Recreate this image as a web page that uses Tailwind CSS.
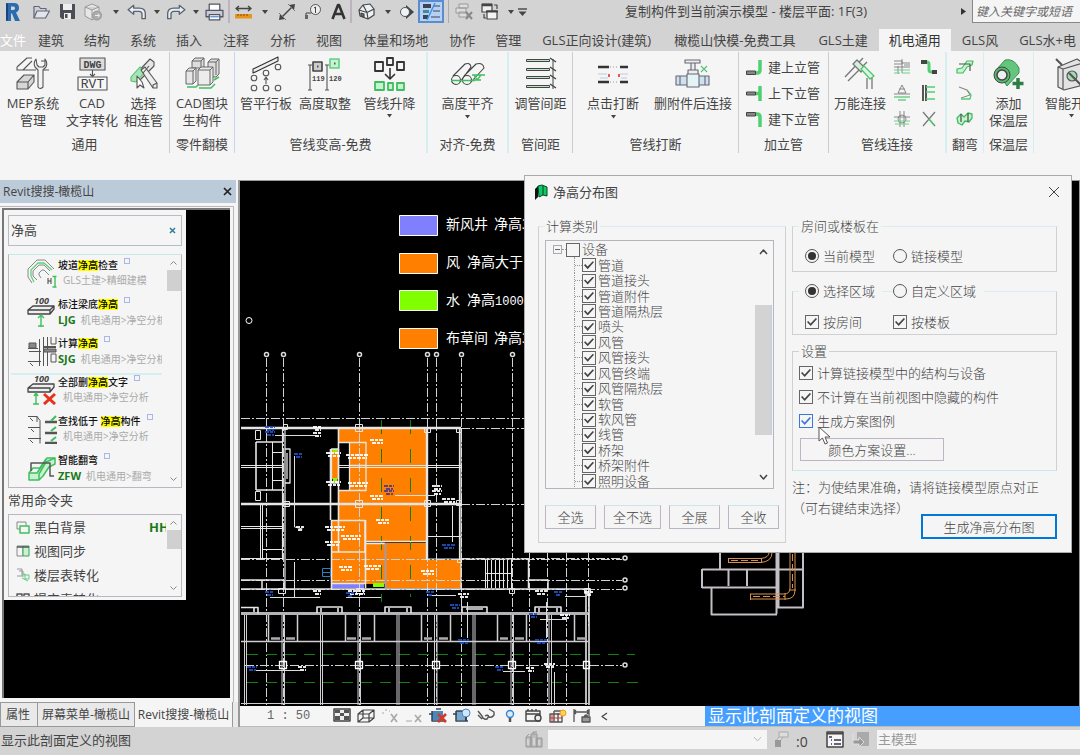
<!DOCTYPE html>
<html lang="zh-CN">
<head>
  <meta charset="UTF-8" />
  <meta name="viewport" content="width=device-width, initial-scale=1.0" />
  <title>净高分布图</title>
  <script src="https://cdn.jsdelivr.net/npm/@tailwindcss/browser@4"></script>
  <style>
    body { font-family: "Open Sans", "Noto Sans CJK SC", sans-serif; }
    svg { fill: none; stroke-linejoin: round; flex-shrink: 0; }
    .tick:checked::before {
      content: ""; width: 10px; height: 8px; background: currentColor;
      clip-path: polygon(0 50%, 12% 36%, 36% 68%, 88% 0, 100% 12%, 37% 100%);
    }
    .dot:checked::before { content: ""; width: 8px; height: 8px; border-radius: 50%; background: #333; }
  </style>
</head>
<body class="h-screen min-h-[755px] flex flex-col overflow-hidden bg-[#f5f5f5] text-[13px] text-[#444]">

  <!-- Barra de acceso rápido -->
  <header class="bg-[#d3d3d3]">
    <div class="h-[25px] flex items-start overflow-hidden">
      <div class="flex h-[23px] items-center pl-1">
        <button class="w-[28px]" aria-label="Revit"><svg width="18" height="20" viewBox="0 0 18 20"><path d="M2 1h8q5 0 5 5q0 3-3 4.500l4 8.500h-5l-3-7.500H7V19H2z" fill="#2b6cb0"/><path d="M7 4.500h2.500q1.500 0 1.500 1.700T9.500 8H7z" fill="#d3d3d3"/><path d="M2 1v18l2-1V2z" fill="#16467d"/></svg></button>
        <button class="w-[27px]" aria-label="打开"><svg width="18" height="16" viewBox="0 0 18 16" stroke="#667" stroke-width="1.200"><path d="M2 14V2.500h5l1.500 2H14V7" fill="#c9d2da"/><path d="M2 14l3-7h12.500l-4 7z" fill="#dfe5ea"/></svg></button>
        <button class="w-[25px]" aria-label="保存"><svg width="17" height="17" viewBox="0 0 17 17"><path d="M1 1h15v15H3l-2-2z" fill="#4b4f55"/><path d="M4 1h9v6H4z" fill="#eee"/><path d="M5 10h7v6H5z" fill="#eee"/><path d="M6 11h2.500v4H6z" fill="#4b4f55"/></svg></button>
        <button class="w-[24px]" aria-label="同步"><svg width="19" height="18" viewBox="0 0 19 18" stroke="#999"><path d="M1 4l7-3 7 3v9l-7 4-7-4zM1 4l7 3 7-3M8 7v10" fill="#e6e6e6"/><circle cx="13" cy="12.500" r="4.500" fill="#aaa"/><path d="M11 12.500h4M14 10.500l1.500 2-1.500 2" stroke="#eee"/></svg></button>
        <button class="w-[15px]" aria-label="更多"><svg class="mx-auto" width="6" height="4" viewBox="0 0 6 4"><path d="M0 0h6L3 4z" fill="#444"/></svg></button>
        <button class="w-[28px]" aria-label="撤销"><svg class="mx-auto" width="20" height="16" viewBox="0 0 18 14" stroke="#5a6470" stroke-width="1.200"><path d="M1 5l5-4v2.500h5q5.500 0 5.500 5V13h-3V9q0-2.500-2.500-2.500H6V9z" fill="#e8eef4"/></svg></button>
        <button class="w-[11px]" aria-label="更多"><svg class="mx-auto" width="6" height="4" viewBox="0 0 6 4"><path d="M0 0h6L3 4z" fill="#444"/></svg></button>
        <button class="w-[28px]" aria-label="重做"><svg class="mx-auto" width="20" height="16" viewBox="0 0 18 14" stroke="#5a6470" stroke-width="1.200"><path d="M17 5l-5-4v2.500H7q-5.500 0-5.500 5V13h3V9q0-2.500 2.500-2.500h5V9z" fill="#e8eef4"/></svg></button>
        <button class="w-[11px]" aria-label="更多"><svg class="mx-auto" width="6" height="4" viewBox="0 0 6 4"><path d="M0 0h6L3 4z" fill="#444"/></svg></button>
        <button class="w-[27px]" aria-label="打印"><svg class="mx-auto" width="19" height="18" viewBox="0 0 18 17" stroke="#556" stroke-width="1.200"><path d="M4 7V1h10v6" fill="#fff"/><path d="M1 7h16v6H1z" fill="#c5cdd5"/><path d="M4 11h10v5H4z" fill="#fff"/><path d="M5 13h8" stroke="#4a8bd0"/></svg></button>
        <span class="w-[7px] h-[23px] border-l-2 border-[#bfb2bf]"></span>
        <button class="w-[27px]" aria-label="测量"><svg width="17" height="14" viewBox="0 0 17 14"><path d="M1 3.500h15M4 1L1 3.500 4 6M13 1l3 2.500L13 6" stroke="#444" stroke-width="1.400"/><path d="M0 9h17v4.500H0z" fill="#e8951c"/><path d="M3 9v2M6 9v2M9 9v2M12 9v2" stroke="#7a4c0c"/></svg></button>
        <button class="w-[11px]" aria-label="更多"><svg width="6" height="4" viewBox="0 0 6 4"><path d="M0 0h6L3 4z" fill="#444"/></svg></button>
        <button class="w-[28px]" aria-label="对齐尺寸标注"><svg class="mx-auto" width="18" height="18" viewBox="0 0 18 18"><path d="M3 15L15 3" stroke="#444" stroke-width="1.400"/><path d="M1 17l1-6 5 5zM17 1l-1 6-5-5z" fill="#444"/><path d="M1 10l7 7M10 1l7 7" stroke="#777"/></svg></button>
        <button class="w-[25px]" aria-label="按类别标记"><svg class="mx-auto" width="17" height="16" viewBox="0 0 17 16"><circle cx="10.500" cy="5.500" r="5" stroke="#555" fill="#eee"/><path d="M9 4l1.500-1v6M1 12V9h5.500" stroke="#444"/><path d="M0 11h3v4H0z" fill="#666"/></svg></button>
        <button class="w-[24px]" aria-label="文字"><svg class="mx-auto" width="15" height="17" viewBox="0 0 15 17"><path d="M1.500 16L7 2h1l5.500 14M4 11h7" stroke="#333" stroke-width="2.600"/></svg></button>
        <span class="w-[8px] h-[23px] border-l-2 border-[#bfb2bf]"></span>
        <button class="w-[27px]" aria-label="默认三维视图"><svg width="17" height="17" viewBox="0 0 17 17" stroke="#444" stroke-width="1.200"><path d="M1 7l4-5 7-1 4 5v6l-6 4-8-3z" fill="#eef1f4"/><path d="M1 7l8 2.500 7-3.500M9 9.500L10 16M5 2l4 7.500" /><path d="M3 10l3 1v3l-3-1z" fill="#667"/></svg></button>
        <button class="w-[11px]" aria-label="更多"><svg width="6" height="4" viewBox="0 0 6 4"><path d="M0 0h6L3 4z" fill="#444"/></svg></button>
        <button class="w-[22px]" aria-label="剖面"><svg class="mx-auto" width="16" height="14" viewBox="0 0 16 14"><path d="M7 0l8 7-8 7z" fill="#3d444c"/><circle cx="6" cy="7" r="4.500" fill="#eef3f6" stroke="#555"/></svg></button>
        <button class="w-[26px] h-[23px] flex items-center justify-center border-2 border-[#5b8bd0] bg-[#b5d0f2]" aria-label="细线"><svg width="19" height="17" viewBox="0 0 19 17"><path d="M1 3h8M1 14h5" stroke="#3a4656" stroke-width="4"/><path d="M1 8.500h6" stroke="#3d8f95" stroke-width="3"/><path d="M12 3h6M11 8h7M9 14h9" stroke="#3a4656" stroke-width="1.200"/><path d="M13 0L5 17" stroke="#3b8fe8" stroke-width="1.400"/></svg></button>
        <span class="w-[7px] h-[23px] ml-1 border-l border-[#aaa]"></span>
        <button class="w-[26px]" aria-label="关闭隐藏窗口"><svg width="18" height="17" viewBox="0 0 18 17" stroke="#999"><path d="M4 1h9v4H4zM1 5h10v5H1zM4 9h8v5H4z" fill="#ddd"/><path d="M11 9l6 7M17 9l-6 7" stroke="#888" stroke-width="2"/></svg></button>
        <button class="w-[22px]" aria-label="切换窗口"><svg width="18" height="18" viewBox="0 0 18 18" stroke="#444" stroke-width="1.200"><path d="M1 1h10v8H1z" fill="#eee"/><path d="M1 2h10M6 9h10" stroke-width="2.400"/><path d="M6 8h10v8H6z" fill="#f4f4f4"/><path d="M5 8.500h12" stroke-width="2"/><path d="M13 2h3v4M3 11v4h2"/></svg></button>
        <button class="w-[15px]" aria-label="更多"><svg class="mx-auto" width="6" height="4" viewBox="0 0 6 4"><path d="M0 0h6L3 4z" fill="#444"/></svg></button>
        <button class="w-[12px]" aria-label="自定义快速访问工具栏"><svg width="9" height="8" viewBox="0 0 9 8"><path d="M0 1h9" stroke="#444" stroke-width="1.400"/><path d="M0.500 3.500h8L4.500 8z" fill="#444"/></svg></button>
      </div>
      <h1 class="flex-1 pl-[95px] leading-[23px] whitespace-nowrap">复制构件到当前演示模型 - 楼层平面: 1F(3)</h1>
      <svg class="mt-2 mr-[6px]" width="5" height="7" viewBox="0 0 5 7"><path d="M0 0v7l5-3.500z" fill="#333"/></svg>
      <input type="text" aria-label="搜索" placeholder="键入关键字或短语" class="w-[108px] h-[23px] pl-[3px] bg-[#f5f5f5] border-l border-b border-[#888] text-[12px] italic placeholder:text-[#666]" />
    </div>
    <nav class="mt-1 h-[22px] flex overflow-hidden whitespace-nowrap leading-[22px]">
      <a href="#" class="pr-[2px] text-white">文件</a>
      <a href="#" class="px-[10px]">建筑</a>
      <a href="#" class="px-[10px]">结构</a>
      <a href="#" class="px-[10px]">系统</a>
      <a href="#" class="px-[10px]">插入</a>
      <a href="#" class="px-[11px]">注释</a>
      <a href="#" class="px-[10px]">分析</a>
      <a href="#" class="px-[10px]">视图</a>
      <a href="#" class="px-[11px]">体量和场地</a>
      <a href="#" class="px-[10px]">协作</a>
      <a href="#" class="px-[10px]">管理</a>
      <a href="#" class="px-[11px]">GLS正向设计(建筑)</a>
      <a href="#" class="px-[12px]">橄榄山快模-免费工具</a>
      <a href="#" class="px-[11px]">GLS土建</a>
      <a href="#" class="px-[10px] bg-[#f5f5f5] text-[#333]">机电通用</a>
      <a href="#" class="px-[11px]">GLS风</a>
      <a href="#" class="px-[10px]">GLS水+电</a>
    </nav>
  </header>

  <!-- Cinta de opciones -->
  <section class="flex pt-px pb-[27px] overflow-hidden text-center leading-[17px] whitespace-nowrap">
    <div class="w-[170px] shrink-0 h-[101px] flex flex-col justify-between border-r border-[#ccc]">
      <div class="flex pt-1">
        <button class="w-[66px] flex flex-col items-center"><svg class="mb-[3px]" width="36" height="36" viewBox="0 0 36 36" stroke="#555" stroke-width="1.100"><path d="M2 11L12 2h5M24 14h10M5 14h16M2 11v3h6L17 5M26 5h5" /><path d="M2 26l7-7h10v7l-6 7H2zM2 26h11v7M13 26l6-7" fill="#d6d6d6"/><path d="M21 3q-3 4-1 8l3 3v17q2 3 5 0V14l3-3q2-4-1-8v6l-2 2h-4l-2-2z" fill="#f3f3f3"/></svg>MEP系统<br>管理</button>
        <button class="w-[52px] flex flex-col items-center"><svg class="mb-[3px]" width="36" height="36" viewBox="0 0 36 36" stroke="#555" stroke-width="1.100"><path d="M6 2h25v12H6z" fill="#ddd"/><path d="M4 21h29v13H4z" fill="#f7f7f7"/><path d="M18.500 14v6M16 18l2.500 2.500L21 18"/><text x="18.500" y="11.500" font-size="10" font-family="Liberation Mono" text-anchor="middle" fill="#444" stroke="none" font-weight="bold">DWG</text><text x="18.500" y="31.500" font-size="13" font-family="Liberation Mono" text-anchor="middle" fill="#444" stroke="none">RVT</text></svg>CAD<br>文字转化</button>
        <button class="w-[51px] flex flex-col items-center"><svg class="mb-[3px]" width="36" height="36" viewBox="0 0 36 36" stroke="#555" stroke-width="1.100"><path d="M6 22L24 3l4 3v4L12 26z" fill="#e5e5e5"/><path d="M5 21l9-10 5 5-9 10-5-1z" fill="#a6e6b4" stroke="#4fbf6b"/><path d="M15 14l4-3 12 16v5h-4z" fill="#eee"/><path d="M31 27l-4 2v3M17 17l6-7"/><path d="M11 20v12l3-3 4 3-2-6z" fill="#fff"/></svg>选择<br>相连管</button>
      </div>
      <h2>通用</h2>
    </div>
    <div class="w-[65px] shrink-0 h-[101px] flex flex-col justify-between border-r border-[#c5d5ee]">
      <div class="flex pt-1">
        <button class="w-full flex flex-col items-center"><svg class="mb-[3px]" width="36" height="36" viewBox="0 0 36 36" stroke="#666" stroke-width="1"><path d="M8 5l3-3h9v10H8zM8 5h9v8M17 5l3-3M24 6l3-3h8v15l-3 3h-8zM24 6h8v13M32 6l3-3" fill="#ddd"/><path d="M2 15l3-3h7v13l-3 3H2zM2 15h7v13M9 15l3-3" fill="#e6e6e6"/><path d="M14 14l3-3h12v15l-3 3H14zM14 14h12v15M26 14l3-3" fill="#ececec"/><path d="M3 31h9l2-2M15 32h12l4-4M30 24l5-3" stroke="#3fbf5f" stroke-width="1.500"/></svg>CAD图块<br>生构件</button>
      </div>
      <h2>零件翻模</h2>
    </div>
    <div class="w-[193px] shrink-0 h-[101px] flex flex-col justify-between border-r-2 border-[#d5eff0]">
      <div class="flex pt-1">
        <button class="w-[62px] flex flex-col items-center"><svg class="mb-[3px]" width="36" height="36" viewBox="0 0 36 36" stroke="#555" stroke-width="1.100"><path d="M5 13L30 1v4L5 17z" fill="#eee" stroke="#333"/><circle cx="30" cy="11" r="2.800"/><circle cx="18" cy="17" r="2.800"/><circle cx="6" cy="22" r="2.800"/><circle cx="6" cy="32" r="2.800"/><circle cx="18" cy="32" r="2.800"/><circle cx="30" cy="32" r="2.800"/><path d="M18 28v-7M16 24l2-3 2 3"/></svg>管平行板</button>
        <button class="w-[56px] flex flex-col items-center"><svg class="mb-[3px]" width="36" height="36" viewBox="0 0 36 36" stroke="#555" stroke-width="1.100"><path d="M3 9v25M1 9h4M1 34h4M20 9v25M18 9h4M18 34h4"/><path d="M6 6h9v9H6z" fill="#ccc" stroke="#444" stroke-width="1.600"/><path d="M23 3h9v9h-9z" fill="#c8f2d2" stroke="#5fd080" stroke-width="1.600"/><path d="M10 10.500h1.500M27 7.500h1.500" stroke-width="2"/><text x="5" y="25" font-size="7" font-family="Liberation Mono" font-weight="bold" fill="#444" stroke="none">119</text><text x="22" y="25" font-size="7" font-family="Liberation Mono" font-weight="bold" fill="#444" stroke="none">120</text></svg>高度取整</button>
        <button class="w-[73px] flex flex-col items-center"><svg class="mb-[3px]" width="36" height="36" viewBox="0 0 36 36" stroke="#333" stroke-width="1.800"><path d="M3 6h8v9H3zM15 2h6v7h-6zM25 6h7v8h-7z"/><path d="M18 12v11M13 18l5 5 5-5" stroke-width="1.600"/><path d="M3 26h9v8H3zM16 27h5v7h-5zM25 27h7v7h-7z" fill="#c8f2d2" stroke="#3fbf5f"/></svg>管线升降<svg class="mt-[2px]" width="5" height="4" viewBox="0 0 5 4"><path d="M0 0h5L2.500 3.500z" fill="#444"/></svg></button>
      </div>
      <h2>管线变高-免费</h2>
    </div>
    <div class="w-[81px] shrink-0 h-[101px] flex flex-col justify-between border-r-2 border-[#d5eff0]">
      <div class="flex pt-1">
        <button class="w-full flex flex-col items-center"><svg class="mb-[3px]" width="36" height="36" viewBox="0 0 36 36" stroke="#444" stroke-width="1.100"><circle cx="6" cy="24" r="4.500"/><circle cx="17" cy="24" r="4.500"/><path d="M3 20L15 8q5-2 6 3L10 26M14 20L26 8q7-2 8 4L21 26"/><path d="M1 24.500h24M22 19h13M24 19l3 5 4-5M23 24h8" stroke="#3fbf5f" stroke-width="1.400"/></svg>高度平齐<svg class="mt-[3px]" width="5" height="4" viewBox="0 0 5 4"><path d="M0 0h5L2.500 3.500z" fill="#444"/></svg></button>
      </div>
      <h2>对齐-免费</h2>
    </div>
    <div class="w-[64px] shrink-0 h-[101px] flex flex-col justify-between border-r border-[#ccc]">
      <div class="flex pt-1">
        <button class="w-full flex flex-col items-center"><svg class="mb-[3px]" width="36" height="36" viewBox="0 0 36 36" stroke="#444" stroke-width="1"><path d="M3.500 3.500h23v2h-23zM3.500 12.500h23v2h-23zM3.500 20.500h23v2h-23zM3.500 29.500h23v2h-23z" fill="#bfe5c8"/><path d="M30 3v30" /><path d="M27 2l6 4M27 11l6 4M27 19l6 4M27 28l6 4" stroke-width="1.400"/></svg>调管间距</button>
      </div>
      <h2>管间距</h2>
    </div>
    <div class="w-[166px] shrink-0 h-[101px] flex flex-col justify-between border-r border-[#ccc]">
      <div class="flex pt-1">
        <button class="w-[80px] flex flex-col items-center"><svg class="mb-[3px]" width="36" height="36" viewBox="0 0 36 36"><path d="M3 11h11M25 11h8M3 26h11M25 26h8" stroke="#333" stroke-width="2.400"/><path d="M15 11h9M15 26h9" stroke="#999" stroke-dasharray="1 2"/><path d="M3 18h9M25 18h8M5 22h8M26 22h6" stroke="#bcd" /><path d="M14 18v3M24 18v3" stroke="#e55" stroke-width="2"/></svg>点击打断<svg class="mt-[3px]" width="5" height="4" viewBox="0 0 5 4"><path d="M0 0h5L2.500 3.500z" fill="#444"/></svg></button>
        <button class="w-[80px] flex flex-col items-center"><svg class="mb-[3px]" width="36" height="36" viewBox="0 0 36 36" stroke="#667" stroke-width="1.100"><path d="M10 4h15v3H10zM16 7h4v7h-4zM13 14h10v5H13z" fill="#eee"/><path d="M1 20h33v9H1z" fill="#cfe0ee"/><path d="M12 18h12v13H12z" fill="#e4f4f6"/><path d="M5 20v9M30 20v9"/><path d="M26 10l6 6M32 10l-6 6" stroke="#4fc56d"/></svg>删附件后连接</button>
      </div>
      <h2>管线打断</h2>
    </div>
    <div class="w-[90px] shrink-0 h-[101px] flex flex-col justify-between border-r border-[#ccc]">
      <div class="flex flex-col gap-px pt-[3px] pl-[7px]">
        <button class="flex items-center gap-[6px] h-[25px]"><svg width="16" height="17" viewBox="0 0 16 17"><path d="M14 1v10q0 3-3 3h-1" stroke="#4fcf70" stroke-width="3.500"/><path d="M0.500 12h9v3.500h-9z" fill="#888" stroke="#444"/></svg>建上立管</button>
        <button class="flex items-center gap-[6px] h-[25px]"><svg width="16" height="17" viewBox="0 0 16 17"><path d="M14 1v15M9 8.500h4" stroke="#4fcf70" stroke-width="3.500"/><path d="M0.500 7h9v3h-9z" fill="#888" stroke="#444"/></svg>上下立管</button>
        <button class="flex items-center gap-[6px] h-[25px]"><svg width="16" height="17" viewBox="0 0 16 17"><path d="M14 16V6q0-3-3-3h-1" stroke="#4fcf70" stroke-width="3.500"/><path d="M0.500 1.500h9V5h-9z" fill="#888" stroke="#444"/></svg>建下立管</button>
      </div>
      <h2>加立管</h2>
    </div>
    <div class="w-[118px] shrink-0 h-[101px] flex flex-col justify-between border-r-2 border-[#d5eff0]">
      <div class="flex pt-1">
        <button class="w-[62px] flex flex-col items-center"><svg class="mb-[3px]" width="36" height="36" viewBox="0 0 36 36" stroke="#777" stroke-width="1.300"><path d="M3 21L21 2M6 25L25 6"/><path d="M11 8l4-4 8 8-4 4z" fill="#d8efe0"/><path d="M19 13L28 23l4-3L22 10z" stroke="#4fc56d" fill="#d9f7e0"/><path d="M25 22v11M30 22v11"/></svg>万能连接</button>
        <div class="grid grid-cols-2 w-[54px] gap-y-2 justify-items-center -ml-[3px] mt-[2px]">
          <button aria-label="水管连接"><svg width="18" height="18" viewBox="0 0 18 18" stroke="#888"><path d="M1 3h8v3H1M9 1v14M5 8v8M1 9h8M9 5h8M9 9h8M11 7h6"/><path d="M1 12h8M1 15h6M9 12h8M9 15h8" stroke="#6fd08a"/></svg></button>
          <button aria-label="弯头连接"><svg width="18" height="18" viewBox="0 0 18 18"><path d="M5 4h2q2 0 2 3v5q0 2 3 2h1" stroke="#4fcf70" stroke-width="3"/><path d="M1 2h6v4H1zM12 12h5v4h-5z" fill="#444"/></svg></button>
          <button aria-label="三通连接"><svg width="18" height="18" viewBox="0 0 18 18" stroke="#888"><path d="M9 1l-4 8h8zM6 5h6M1 10h16"/><path d="M1 13h16M5 16h8" stroke="#6fd08a" stroke-width="1.500"/></svg></button>
          <button aria-label="批量连接"><svg width="18" height="18" viewBox="0 0 18 18"><path d="M3 1v16M6 1v16" stroke="#444" stroke-width="1.800"/><path d="M6 3h9M6 8h9M6 15h9" stroke="#4fcf70" stroke-width="1.500"/></svg></button>
          <button aria-label="四通连接"><svg width="18" height="18" viewBox="0 0 18 18" stroke="#888"><path d="M1 7h16M7 1v16M11 1v16"/><circle cx="9" cy="9" r="4"/><path d="M1 11h16M2 14h14" stroke="#6fd08a"/></svg></button>
          <button aria-label="断开连接"><svg width="18" height="18" viewBox="0 0 18 18"><path d="M3 2l12 14M15 2L3 16" stroke="#777" stroke-width="1.200"/><path d="M9 9l5 6" stroke="#4fcf70" stroke-width="1.500"/></svg></button>
        </div>
      </div>
      <h2>管线连接</h2>
    </div>
    <div class="w-[37px] shrink-0 h-[101px] flex flex-col justify-between border-r border-[#d5eff0]">
      <div class="flex flex-col items-center gap-2 pt-[6px]">
        <button aria-label="翻弯一"><svg width="18" height="18" viewBox="0 0 18 18" stroke="#3fbf5f" stroke-width="1.200"><path d="M1 11l5-1 5-7h6l-1 4-5 2-4 6H1z" fill="#c8f2d2"/><path d="M3 6h11v7" stroke="#555"/></svg></button>
        <button aria-label="翻弯二"><svg width="18" height="18" viewBox="0 0 18 18"><path d="M3 3l8 3" stroke="#888" stroke-width="1.300"/><path d="M11 6l4 5-1 4-9 0" stroke="#4fcf70" stroke-width="1.300"/><path d="M11 6l3 5-9 3" stroke="#888"/></svg></button>
        <button aria-label="翻弯三"><svg width="18" height="18" viewBox="0 0 18 18" stroke="#3fbf5f" stroke-width="1.300"><path d="M1 8l4-4 3 3 4-4 4 1v4l-3 4-4-1-3 4-4-2z" fill="#c8f2d2"/><path d="M5 4v8M12 3v9" stroke="#555"/></svg></button>
      </div>
      <h2>翻弯</h2>
    </div>
    <div class="w-[50px] shrink-0 h-[101px] flex flex-col justify-between border-r border-[#d5eff0]">
      <div class="flex pt-1">
        <button class="w-full flex flex-col items-center"><svg class="mb-[3px]" width="36" height="36" viewBox="0 0 36 36"><path d="M5 14L14 4q9-2 14 8v5L16 30z" fill="#63c67c" stroke="#3f8f55"/><circle cx="11" cy="19" r="8" fill="#57b86f" stroke="#444"/><circle cx="11" cy="19" r="5" fill="#eee" stroke="#444" stroke-width="1.500"/><path d="M27 22v11M21.500 27.500h11" stroke="#2f7d45" stroke-width="3.500"/></svg>添加<br>保温层</button>
      </div>
      <h2>保温层</h2>
    </div>
    <div class="shrink-0 h-[101px] pt-1 pl-[11px]">
      <button class="flex flex-col items-start"><svg class="mb-[3px] ml-[10px]" width="36" height="36" viewBox="0 0 36 36" stroke="#555" stroke-width="1.200"><path d="M3 11L22 3l6 4v22L9 34l-6-3z" fill="#e3e3e3"/><path d="M3 11l5 2v20M8 13l20-6"/><circle cx="17" cy="20" r="5" fill="#a6d6b4"/><path d="M1 3l6 6M14 17l14 14" stroke-width="2"/></svg>智能开洞<svg class="ml-[24px] mt-[2px]" width="5" height="4" viewBox="0 0 5 4"><path d="M0 0h5L2.500 3.500z" fill="#444"/></svg></button>
    </div>
  </section>

  <main class="relative flex-1 min-h-0 flex">
    <!-- Panel lateral de búsqueda -->
    <aside class="w-[240px] shrink-0 flex flex-col border-r-2 border-[#999]">
      <div class="h-[23px] mr-[2px] flex items-center justify-between pl-[3px] pr-[4px] bg-[#bccbd9] text-[12px]">
        <h2>Revit搜搜-橄榄山</h2>
        <button aria-label="关闭面板"><svg width="9" height="9" viewBox="0 0 9 9"><path d="M1 1l7 7M8 1L1 8" stroke="#222" stroke-width="1.700"/></svg></button>
      </div>
      <div class="mt-[3px] mr-[4px] flex-1 min-h-0 border-t border-r border-[#bdb6bf] pt-px pl-[2px] pr-[3px] pb-1">
        <div class="h-full bg-black border-t-2 border-l-2 border-[#777]">
          <div class="w-[182px] bg-[#f5f5f5] px-[4px] pt-[5px] pb-[3px]">
            <div class="h-[31px] flex items-center border border-[#b8bcc4] pr-[5px]">
              <input type="text" aria-label="搜索命令" value="净高" class="w-full pl-[2px] bg-transparent outline-none" />
              <button aria-label="清除"><svg width="7" height="7" viewBox="0 0 7 7"><path d="M1 1l5 5M6 1L1 6" stroke="#2e7d9e" stroke-width="1.500"/></svg></button>
            </div>
            <div class="mt-[8px] h-[234px] flex border border-[#bdb6c2] border-t-[#c9e6e8] overflow-hidden">
              <ul class="flex-1 min-w-0 pt-[3px] pl-[2px] overflow-hidden whitespace-nowrap text-[10px] leading-[15px] text-[#aaa]">
                <li class="h-[39px] flex pl-[16px]">
                  <svg width="30" height="30" viewBox="0 0 30 30"><path d="M5 25l-4-6v-8l9-9h8l9 9M10 22l-4-4v-5l6-6h5l6 6M14 20l-2-3v-2l3-3h2l5 5" stroke="#888"/><path d="M7 24l-3-6v-6l7-7h6l8 7" stroke="#5fcf7c" stroke-width="1.300"/><path d="M21 20v6M24 20v6M21 23h3" stroke="#444"/><path d="M28 18v11M25.500 18.500h4M25.500 29h4" stroke="#3fbf5f" stroke-width="1.400"/></svg>
                  <div class="ml-px"><p class="text-[#111] font-medium">坡道<mark class="inline-block leading-[11px] bg-[#ff0]">净高</mark>检查<span class="inline-block size-[6px] border border-[#a9b8e8] mb-[5px] ml-[6px]"></span></p><p class="pl-[5px]">GLS土建&gt;精细建模</p></div>
                </li>
                <li class="h-[39px] flex pl-[16px]">
                  <svg width="30" height="30" viewBox="0 0 30 30"><text x="7" y="7" font-size="9" font-style="italic" font-weight="bold" fill="#444">100</text><path d="M1 13l5-4h21v3l-4 5H1zM1 13h22v4M23 13l4-4" fill="#eee" stroke="#444" stroke-width="1.300"/><path d="M14 18v12M11 21l3-3 3 3M11 29h6" stroke="#3fbf5f" stroke-width="1.400"/></svg>
                  <div class="ml-px"><p class="text-[#111] font-medium">标注梁底<mark class="inline-block leading-[11px] bg-[#ff0]">净高</mark><span class="inline-block size-[6px] border border-[#a9b8e8] mb-[5px] ml-[6px]"></span></p><p><b class="text-[11px] text-[#1a7a1a] mr-[5px]">LJG</b>机电通用&gt;净空分析</p></div>
                </li>
                <li class="h-[37px] flex pl-[16px]">
                  <svg width="30" height="30" viewBox="0 0 30 30" stroke="#555"><path d="M1 12.500h10M2 15.500h12M1 25.500h13M3 27l3 3M12.500 3v27M16.500 1v29M20.500 1v29M24 1v7h5V1M24 18h5v8h-5z"/><path d="M2 7h7v5H2zM17 13h12v3H17z" fill="#888"/><path d="M16 11h13" stroke-width="2"/></svg>
                  <div class="ml-px"><p class="text-[#111] font-medium">计算<mark class="inline-block leading-[11px] bg-[#ff0]">净高</mark><span class="inline-block size-[6px] border border-[#a9b8e8] mb-[5px] ml-[6px]"></span></p><p><b class="text-[11px] text-[#1a7a1a] mr-[5px]">SJG</b>机电通用&gt;净空分析</p></div>
                </li>
                <li class="h-[41px] flex pl-[16px] border-t-2 border-[#d5eff0]">
                  <svg width="30" height="30" viewBox="0 0 30 30"><text x="7" y="7" font-size="9" font-style="italic" font-weight="bold" fill="#444">100</text><path d="M1 13l5-4h21v3l-4 5H1zM1 13h22v4" fill="#eee" stroke="#444" stroke-width="1.300"/><path d="M9 18v11M7 21l2-3 2 3M6 29h6" stroke="#3fbf5f" stroke-width="1.400"/><path d="M17 19l11 10M28 19L17 29" stroke="#e8321c" stroke-width="3"/></svg>
                  <div class="ml-px"><p class="text-[#111] font-medium">全部删<mark class="inline-block leading-[11px] bg-[#ff0]">净高</mark>文字<span class="inline-block size-[6px] border border-[#a9b8e8] mb-[5px] ml-[6px]"></span></p><p class="pl-[5px]">机电通用&gt;净空分析</p></div>
                </li>
                <li class="h-[39px] flex pl-[16px]">
                  <svg width="30" height="30" viewBox="0 0 30 30" stroke="#555"><path d="M1 2.500h9l3 4v23M1 13.500h12M1 24.500h13M3 4l3 3M4 15l3 3M3 26l3 3M10 2v6"/><path d="M18 8h12M18 19h12M18 29h12" stroke-width="2.400"/><path d="M24 7l5-5M24 17l5-4M24 27l5-4" stroke="#3fbf5f" stroke-width="2"/></svg>
                  <div class="ml-px"><p class="text-[#111] font-medium">查找低于 <mark class="inline-block leading-[11px] bg-[#ff0]">净高</mark>构件<span class="inline-block size-[6px] border border-[#a9b8e8] mb-[5px] ml-[6px]"></span></p><p class="pl-[5px]">机电通用&gt;净空分析</p></div>
                </li>
                <li class="h-[36px] flex pl-[16px]">
                  <svg width="30" height="30" viewBox="0 0 30 30" stroke="#3fbf5f" stroke-width="1.500"><path d="M2 20h8L20 5h8v6l-6 3-6 9-4 4H2z" fill="#c8f2d2"/><path d="M2 20l4-5h7l6-9M28 5l-9 4-7 12v6"/><path d="M4 18v-8h19v13h4" stroke="#555"/></svg>
                  <div class="ml-px"><p class="text-[#111] font-medium">智能翻弯<span class="inline-block size-[6px] border border-[#a9b8e8] mb-[5px] ml-[6px]"></span></p><p><b class="text-[11px] text-[#1a7a1a] mr-[5px]">ZFW</b>机电通用&gt;翻弯</p></div>
                </li>
              </ul>
              <div class="w-[15px] ml-1 flex flex-col items-center py-[6px]">
                <svg width="7" height="4" viewBox="0 0 7 4"><path d="M0.500 3.500l3-3 3 3" stroke="#888"/></svg>
                <div class="mt-[5px] w-[14px] h-[21px] bg-[#d0d0d0]"></div>
                <svg class="mt-auto" width="7" height="4" viewBox="0 0 7 4"><path d="M0.500 0.500l3 3 3-3" stroke="#888"/></svg>
              </div>
            </div>
            <h3 class="h-[26px] leading-[25px]">常用命令夹</h3>
            <div class="h-[83px] flex border border-[#bdb6c2] overflow-hidden">
              <ul class="flex-1 min-w-0 overflow-hidden whitespace-nowrap leading-[24px]">
                <li class="flex items-center pl-[7px] gap-[4px]"><svg width="14" height="14" viewBox="0 0 14 14"><path d="M1 2h9v7H1z" stroke="#888"/><path d="M4 6h9v7H4z" fill="#f5f5f5" stroke="#3fbf5f" stroke-width="1.500"/></svg>黑白背景<b class="ml-auto -mr-[3px] text-[#1a7a1a] font-bold">HH</b></li>
                <li class="flex items-center pl-[7px] gap-[4px]"><svg width="14" height="14" viewBox="0 0 14 14"><path d="M1 2h6v10H1z" stroke="#888"/><path d="M7 2h6v10H7z" fill="#c8f2d2" stroke="#3f9f5f"/><path d="M1 3h12" stroke="#555" stroke-width="1.500"/></svg>视图同步</li>
                <li class="flex items-center pl-[7px] gap-[4px]"><svg width="14" height="14" viewBox="0 0 14 14"><path d="M1 1h5v7H1M3 3h4v6" stroke="#999"/><path d="M6 6h3v5h4V7H8M6 10l6 3" stroke="#5fcf7c"/></svg>楼层表转化</li>
                <li class="flex items-center pl-[7px] gap-[4px]"><svg width="14" height="14" viewBox="0 0 14 14"><path d="M1 2h5v5H1zM8 2h5v5H8z" stroke="#555" stroke-width="1.500"/></svg>提审表转化</li>
              </ul>
              <div class="w-[15px] flex flex-col items-center py-[6px]">
                <svg width="7" height="4" viewBox="0 0 7 4"><path d="M0.500 3.500l3-3 3 3" stroke="#888"/></svg>
                <div class="mt-[5px] w-[14px] h-[19px] bg-[#d0d0d0]"></div>
                <svg class="mt-auto" width="7" height="4" viewBox="0 0 7 4"><path d="M0.500 0.500l3 3 3-3" stroke="#888"/></svg>
              </div>
            </div>
          </div>
        </div>
      </div>
      <div class="flex h-[25px] text-[12px] leading-[24px] whitespace-nowrap bg-[#e9e9e9]">
        <button class="w-[38px] border border-[#999] pr-[2px]">属性</button>
        <button class="w-[97px] border border-l-0 border-[#999]">屏幕菜单-橄榄山</button>
        <button class="w-[98px] bg-[#f5f5f5] border-r border-[#999]">Revit搜搜-橄榄山</button>
      </div>
    </aside>

    <!-- Vista del plano -->
    <section class="flex-1 min-w-0 flex flex-col">
      <div class="flex-1 min-h-0 overflow-hidden bg-black border-t border-r border-[#999]">
        <svg width="840" height="524" viewBox="240 181 840 524" id="plan">
          <g stroke="#fff">
            <path d="M399.500 215.500h38v20h-38z" fill="#8080ff"/>
            <path d="M399.500 253.500h38v20h-38z" fill="#ff8000"/>
            <path d="M399.500 290.500h38v20h-38z" fill="#80ff00"/>
            <path d="M399.500 328.500h38v20h-38z" fill="#ff8000"/>
          </g>
          <g fill="#fff" font-size="14">
            <text x="446" y="229">新风井</text><text x="494" y="229">净高3</text>
            <text x="446" y="267">风</text><text x="467" y="267">净高大于</text>
            <text x="446" y="305">水</text><text x="467" y="305">净高<tspan font-family="Liberation Mono" font-size="12">10000</tspan></text>
            <text x="446" y="343">布草间</text><text x="494" y="343">净高3</text>
          </g>
          <circle cx="249" cy="320.500" r="3" stroke="#fff"/>

          <!-- zonas coloreadas -->
          <g fill="#ff8000">
            <path d="M339 429h88v112h-88zM332 520h33v64h-33zM366 543h19v41h-19zM386 543h41v45h-41zM427 560h34v28h-34zM332 449h6v30h-6z"/>
            <path d="M339 442h10v48h-10z" fill="#000"/>
            <path d="M332 583h32v5h-32z" fill="#8080ff"/>
            <path d="M373 583h11v4h-11zM333 449h4v4h-4zM333 478h4v4h-4z" fill="#80ff00"/>
          </g>

          <!-- ejes -->
          <g stroke="#cfd3d6" stroke-dasharray="9 2 2 2">
            <path d="M266.500 358V705M283.500 358V705M359.500 358V705M427.500 358V705M436.500 358V705M461.500 358V705M512.500 358V705M529.500 553V705M547.500 553V705M566.500 553V705M588.500 553V628"/>
            <path d="M241 418.500H524M461 428.500H524M461 504.500H524M241 559.500H622M241 580.500H622M241 589.500H622M461 558.500H622M245 665.500H622"/>
          </g>
          <g stroke="#ddd" stroke-width="1.500">
            <circle cx="266.500" cy="354.500" r="2"/><circle cx="283.500" cy="354.500" r="2"/><circle cx="359.500" cy="354.500" r="2"/><circle cx="427.500" cy="354.500" r="2"/><circle cx="436.500" cy="354.500" r="2"/><circle cx="461.500" cy="354.500" r="2"/><circle cx="512.500" cy="354.500" r="2"/>
            <circle cx="625" cy="558" r="2"/><circle cx="625" cy="580" r="2"/><circle cx="625" cy="588" r="2"/><circle cx="625" cy="665" r="2"/>
          </g>
          <g stroke="#118011">
            <path d="M381.500 420V602M410.500 420V597" stroke-dasharray="14 15"/>
            <path d="M247 654.500H635M247 682.500H639" stroke-dasharray="11 8"/>
          </g>

          <!-- muros -->
          <g stroke="#e6e6e6">
            <path d="M241 428H461M241 504H461" stroke-width="2.500"/>
            <path d="M241 465.500H283M339 465.500H461M241 467.500H283M339 467.500H461"/>
            <path d="M282.500 428V559M285 428V589" stroke-width="1.200"/>
            <path d="M256 442H283M256 442V490M256 490H283" stroke-width="1.600"/>
            <path d="M272.500 442V490M272 452.500h11M272 480.500h11M255.500 430.500h5v9h-5zM255.500 491.500h5v9h-5z"/>
            <path d="M285 449h5v34h-5M287 453v26" stroke-width="1.300"/>
            <path d="M241 526.500H283M241 528.500H283M260.500 504V558M262.500 504V558M262 549.500H283M241 558.500H283"/>
            <path d="M241 580H284M262 580V589M284 580V589" stroke-width="1.500"/>
            <path d="M338.500 428V552M330.500 449V520" stroke-width="1.600"/>
            <path d="M331.500 449h7v34h-7zM339 442.500h27v48h-27M349.500 442V490M349 465.500h17" stroke-width="1.300"/>
            <path d="M331 520.500h34v31M331.500 520v69M331 552h34M365.500 520V588M331 583.500h34" stroke-width="1.600"/>
            <path d="M365 541.500H427M366 543.500H385" stroke-width="1.300"/>
            <path d="M385.500 543V588" stroke="#a59aa5" stroke-width="2"/>
            <path d="M427 428V560" stroke-width="2.400"/>
            <path d="M461 428V589M459.500 428V559" stroke-width="1.200"/>
            <path d="M427 536.500H461M427 559H529M452.500 506V542"/>
            <path d="M241 589H588M586 589V705M589 589V705" stroke-width="1.600"/>
            <path d="M485.500 560V588M487.500 560V588M491.500 560V588M495.500 560V588M499.500 560V588M503.500 560V588M507.500 560V588M511.500 560V588M485 573.500H512"/>
            <path d="M528.500 559V588M530 580h18v9" stroke-width="1.500"/>
            <path d="M283.500 424.500h4v5h-4zM355.500 424.500h7v7h-7zM424.500 428.500h6v4h-6zM456.500 428.500h5v4h-5zM283.500 501.500h6v5h-6zM355.500 500.500h7v7h-7zM424.500 500.500h6v6h-6zM456.500 500.500h5v5h-5zM509.500 588.500h5v5h-5zM278.500 588.500h7v5h-7zM356.500 588.500h7v5h-7zM457.500 559.500h4v3h-4zM584.500 588.500h6v5h-6z"/>
          </g>
          <g stroke="#d0cdd2">
            <path d="M241 613.500H588" stroke-width="3" stroke="#b5b2b7"/>
            <path d="M241 641.500H588" stroke-width="1.500"/>
            <path d="M268.500 615V641M297.500 615V641M345.500 615V641M374.500 615V641M421.500 615V641M450.500 615V641M497.500 615V641M526.500 615V641M574.500 615V641" stroke-width="1.500"/>
            <path d="M244.500 615V705M246.500 615V705M282 615V705M284.500 615V705M320.500 615V705M322.500 615V705M358 615V705M360.500 615V705M397 615V705M399 615V705M434.500 615V705M437 615V705M473 615V705M475 615V705M511 615V705M513.500 615V705M549 615V705M551.500 615V705"/>
            <path d="M241 703.500H588"/>
            <path d="M271 638.500h9M286 638.500h9M347 638.500h9M362 638.500h9M424 638.500h8M439 638.500h9M500 638.500h8M515 638.500h9M577 638.500h9" stroke="#aaa" stroke-width="2.500"/>
            <path d="M241 607.500h17v6M254 608v4M317 613v-6h25v6M321 608v4M338 608v4M385 613v-6h26v6M389 608v4M407 608v4M462 613v-6h25v6M466 609h17M535 613v-6h26v6M539 608v4M557 608v4" stroke="#e6e6e6" stroke-width="1.600"/>
            <path d="M279.500 661.500h7v7h-7zM355.500 661.500h7v7h-7zM432.500 661.500h7v7h-7zM508.500 661.500h7v7h-7zM583.500 661.500h6v7h-6z" stroke="#fff" stroke-width="1.300"/>
          </g>
          <g stroke="#ddd">
            <path d="M275 435.500h40M294.500 456v71l8 2M256 670.500h44M270 597.500h50M346 597.500h35M430 595.500h26M503 671.500h22M467.500 602v36M546.500 602v36M554.500 672v33M294.500 562v35M395 495.500h40M565 596.500h22M540 619.500h26"/>
          </g>

          <!-- tubería exterior -->
          <g stroke="#c4bec6" stroke-width="2">
            <path d="M720 552V569M702 569.500H803M702 569V588M702 587.500H776M728.500 570V586M747 570V586M711.500 588V614.500H777M776.500 552V614M778.500 552V607M803 552V607.500H777"/>
          </g>
          <g stroke="#d9924c">
            <path d="M728 558.500h33q8-1 8-6M728 562.500h33q11-1 11-10M728.500 558v5M761.500 558v5"/>
            <path d="M790 552v36q0 6-6 6h-34M795 552v38q0 9-9 9h-36M750.500 594v6M785 593v7M789 590h7"/>
            <path d="M731 560.500h30M792.500 554v34M753 596.500h32" stroke-dasharray="7 3"/>
          </g>
          <g id="notes"></g>
          <path d="M322.500 568.500h8v8h-8zM322 572.500h8" stroke="#2b7fc4"/>
        </svg>
      </div>
      <div class="h-[21px] flex items-center border-b border-[#bbb]">
        <div class="w-[465px] shrink-0 flex items-center whitespace-nowrap">
          <span class="w-[90px] pl-[27px] text-[12px] font-[Liberation_Mono] text-[#666]">1 : 50</span>
          <button class="w-6" aria-label="详细程度"><svg class="mx-auto" width="18" height="16" viewBox="0 0 18 16"><path d="M1 1h16v12H1z" fill="#eee" stroke="#444" stroke-width="1.500"/><path d="M2 2h5v3H2zM11 2h5v3h-5zM7 5h4v3H7zM2 8h5v4H2zM11 8h5v4h-5z" fill="#555"/></svg></button>
          <button class="w-6" aria-label="视觉样式"><svg class="mx-auto" width="18" height="16" viewBox="0 0 18 16" stroke="#444" stroke-width="1.200"><path d="M1 6h11v8H1zM6 2h11v8l-5 4M1 6l5-4M12 6l5-4M6 2v8h11M1 14l5-4"/></svg></button>
          <button class="w-6" aria-label="日光路径"><svg class="mx-auto" width="18" height="16" viewBox="0 0 18 16"><path d="M10 6l6 8M16 6l-6 8" stroke="#aaa" stroke-width="1.700"/><path d="M1 5h2M4 2h2M8 3h1" stroke="#aaa"/></svg></button>
          <button class="w-6" aria-label="阴影"><svg class="mx-auto" width="18" height="16" viewBox="0 0 18 16"><path d="M10 7l6 7M16 7l-6 7" stroke="#aaa" stroke-width="1.700"/><path d="M1 13h6" stroke="#aaa"/></svg></button>
          <button class="w-6" aria-label="裁剪视图"><svg class="mx-auto" width="18" height="16" viewBox="0 0 18 16"><path d="M3 3h11v9H3z" fill="#4b86bd"/><path d="M0 6h4M3 3v10h12M7 1h5" stroke="#345" stroke-width="1.500"/><path d="M9 6l8 8M17 6l-8 8" stroke="#d03a2a" stroke-width="2.600"/></svg></button>
          <button class="w-6" aria-label="显示裁剪区域"><svg class="mx-auto" width="18" height="16" viewBox="0 0 18 16"><path d="M3 3h10v9H3z" fill="#7ea9cf"/><path d="M0 6h4M3 3v10h12M3 3h8" stroke="#345" stroke-width="1.500"/><circle cx="13" cy="5" r="4" fill="#cfe6ff" stroke="#4b86bd"/><path d="M13 9v4" stroke="#345" stroke-width="2"/></svg></button>
          <button class="w-6" aria-label="临时隐藏"><svg class="mx-auto" width="18" height="16" viewBox="0 0 18 16" stroke="#555" stroke-width="1.400"><path d="M1 3l4 5q1 4 5 3l2-3M8 8q3-2 4 1 3 1 5-2V4l-5-3M1 7l4 4"/></svg></button>
          <button class="w-6" aria-label="显示隐藏"><svg class="mx-auto" width="18" height="16" viewBox="0 0 18 16"><circle cx="9" cy="6" r="3.500" fill="#d5ebff" stroke="#3b82d0" stroke-width="1.400"/><path d="M9 10v4" stroke="#555" stroke-width="2.500"/></svg></button>
          <button class="w-6" aria-label="临时视图属性"><svg class="mx-auto" width="18" height="16" viewBox="0 0 18 16" stroke="#444" stroke-width="1.400"><path d="M1 3h14v10H1zM1 6h14M3 3V1M7 3V1M11 3V1"/><circle cx="13" cy="10" r="3" fill="#eee"/></svg></button>
          <button class="w-6" aria-label="分析模型"><svg class="mx-auto" width="18" height="16" viewBox="0 0 18 16"><path d="M1 6h12v8H1zM5 3h8M5 3v11M9 5v9" stroke="#555" stroke-width="1.400"/><path d="M1 10h12M3 6v8" stroke="#c0392b"/><circle cx="14" cy="5" r="3" fill="#ffd35a" stroke="#f09a1a"/></svg></button>
          <button class="w-6" aria-label="显示约束"><svg class="mx-auto" width="18" height="16" viewBox="0 0 18 16" stroke="#555" stroke-width="1.300"><path d="M1 1v13M16 1v7M1 4h15M3 2L1 4l2 2M14 2l2 2-2 2"/><path d="M9 9h8v5H9zM11 9q2-4 4 0" fill="#999"/></svg></button>
          <button class="w-5" aria-label="收起"><svg class="mx-auto" width="7" height="9" viewBox="0 0 7 9"><path d="M6 1L1 4.500 6 8" stroke="#444" stroke-width="1.300"/></svg></button>
        </div>
        <p class="flex-1 h-[20px] pl-[3px] bg-[#469fff] text-white text-[17px] leading-[19px] whitespace-nowrap overflow-hidden">显示此剖面定义的视图</p>
      </div>
    </section>

    <!-- Ventana de distribución de alturas -->
    <div role="dialog" aria-label="净高分布图" class="absolute left-[524px] -top-[5px] w-[548px] bg-[#f5f5f5] border border-[#aaa] pb-[9px] font-light leading-[18px]">
      <div class="h-[31px] flex items-center pl-[9px] pr-[11px] font-normal">
        <svg width="14" height="16" viewBox="0 0 14 16"><path d="M1 5l3-3v11l-3 3z" fill="#111"/><path d="M4 2l4-1 5 2v9l-4-1-4 2z" fill="#12c95b" stroke="#043" /><path d="M9 2v9" stroke="#043"/></svg>
        <h2 class="ml-[5px]">净高分布图</h2>
        <button class="ml-auto" aria-label="关闭"><svg width="12" height="12" viewBox="0 0 12 12"><path d="M1 1l10 10M11 1L1 11" stroke="#444"/></svg></button>
      </div>
      <div class="flex pl-[13px] pr-[14px] pt-[10px] gap-[7px]">
        <fieldset class="w-[247px] border border-[#d0d0d0] border-t-[#d5eff0] px-[6px] pb-[13px]">
          <legend class="pr-[2px] pl-px">计算类别</legend>
          <div class="mt-[5px] mr-[5px] h-[249px] flex border border-[#b8b3bc] overflow-hidden">
            <ul id="tree" class="flex-1 h-[248px] flex flex-col pt-px pl-[7px] leading-none">
              <li class="flex-1 flex items-center"><button aria-label="折叠" class="size-[9px] border border-[#aaa] flex items-center justify-center"><span class="w-[5px] h-px bg-[#666]"></span></button><span class="w-[4px] border-t border-dotted border-[#999]"></span><label class="flex items-center gap-[2px]"><input type="checkbox" class="tick size-[14px] appearance-none border border-[#666] grid place-content-center" />设备</label></li>
            </ul>
            <div class="w-[20px] flex flex-col items-center py-[8px]">
              <svg width="9" height="6" viewBox="0 0 9 6"><path d="M1 5l3.500-4L8 5" stroke="#444" stroke-width="1.500"/></svg>
              <div class="mt-[50px] w-[17px] h-[130px] bg-[#d3d3d3] border-r border-[#c0cfe8]"></div>
              <svg class="mt-auto" width="9" height="6" viewBox="0 0 9 6"><path d="M1 1l3.500 4L8 1" stroke="#444" stroke-width="1.500"/></svg>
            </div>
          </div>
          <div class="mt-[16px] flex gap-[8px]">
            <button class="w-[51px] h-[24px] border border-[#beb4c4] border-t-[#c9e6e8]">全选</button>
            <button class="w-[57px] h-[24px] border border-[#beb4c4] border-t-[#c9e6e8]">全不选</button>
            <button class="w-[51px] h-[24px] border border-[#beb4c4] border-t-[#c9e6e8]">全展</button>
            <button class="w-[51px] h-[24px] border border-[#beb4c4] border-t-[#c9e6e8]">全收</button>
          </div>
        </fieldset>
        <div class="flex-1 flex flex-col -ml-px">
          <fieldset class="border border-[#d0d0d0] border-t-[#d5eff0] px-[6px] pb-[6px]">
            <legend class="px-[2px]">房间或楼板在</legend>
            <div class="mt-[12px] pl-[6px] flex">
              <label class="w-[88px] flex items-center gap-1"><input type="radio" name="model" checked class="dot size-[14px] rounded-full appearance-none border border-[#555] grid place-content-center" />当前模型</label>
              <label class="flex items-center gap-1"><input type="radio" name="model" class="dot size-[14px] rounded-full appearance-none border border-[#555] grid place-content-center" />链接模型</label>
            </div>
          </fieldset>
          <fieldset class="mt-[10px] border border-[#d0d0d0] border-t-[#d5eff0] px-[6px] pb-[3px]">
            <legend class="pl-[6px] pr-[8px]">
              <span class="flex items-center">
                <label class="w-[77px] flex items-center gap-1"><input type="radio" name="area" checked class="dot size-[14px] rounded-full appearance-none border border-[#555] grid place-content-center" />选择区域</label>
                <span class="w-[11px] h-px bg-[#d5eff0]"></span>
                <label class="flex items-center gap-1"><input type="radio" name="area" class="dot size-[14px] rounded-full appearance-none border border-[#555] grid place-content-center" />自定义区域</label>
              </span>
            </legend>
            <div class="mt-[13px] pl-[6px] flex">
              <label class="w-[88px] flex items-center gap-1"><input type="checkbox" checked class="tick size-[14px] appearance-none border border-[#666] grid place-content-center" />按房间</label>
              <label class="flex items-center gap-1"><input type="checkbox" checked class="tick size-[14px] appearance-none border border-[#666] grid place-content-center" />按楼板</label>
            </div>
          </fieldset>
          <fieldset class="mt-[7px] border border-[#d0d0d0] border-b-[#c9e9ec] px-[6px] pb-[9px]">
            <legend class="px-[2px]">设置</legend>
            <label class="mt-px h-[24px] flex items-center gap-1"><input type="checkbox" checked class="tick size-[14px] appearance-none border border-[#666] grid place-content-center" />计算链接模型中的结构与设备</label>
            <label class="h-[24px] flex items-center gap-1"><input type="checkbox" checked class="tick size-[14px] appearance-none border border-[#666] grid place-content-center" />不计算在当前视图中隐藏的构件</label>
            <label class="h-[24px] flex items-center gap-1"><input type="checkbox" checked class="tick size-[14px] appearance-none border border-[#3b78d8] text-[#3b78d8] grid place-content-center" />生成方案图例</label>
            <button class="mt-[5px] ml-px w-[144px] h-[23px] border border-[#beb4c4]">颜色方案设置...</button>
          </fieldset>
          <p class="mt-[6px] leading-[21px] whitespace-nowrap">注：为使结果准确，请将链接模型原点对正<br>（可右键结束选择）</p>
          <button class="-mt-[5px] ml-auto w-[136px] h-[25px] border-2 border-[#0078d7]">生成净高分布图</button>
        </div>
      </div>
      <!-- puntero -->
      <svg class="absolute left-[293px] top-[250px]" width="13" height="20" viewBox="0 0 13 20"><path d="M1 1v14l3.500-3 2.500 6 2.500-1-2.500-6h5z" fill="#fff" stroke="#555"/></svg>
    </div>
  </main>

  <!-- Barra de estado -->
  <footer class="h-[28px] flex items-center bg-[#d3d3d3] whitespace-nowrap pb-[4px]">
    <span class="w-[525px] pl-px pt-1">显示此剖面定义的视图</span>
    <svg width="18" height="17" viewBox="0 0 18 17" stroke="#999"><path d="M1 6h5v10H1zM6 3h6v13H6zM12 7h5v9h-5zM1 6l3-3M8 3V1h4" fill="#bbb"/><path d="M3 8v6M9 7v7M14 9v5" stroke="#eee"/></svg>
    <select aria-label="工作集" class="ml-[5px] w-[219px] h-[19px] bg-[#f5f5f5] appearance-none"><option></option></select>
    <svg class="-ml-[14px] mr-[5px]" width="9" height="6" viewBox="0 0 9 6"><path d="M1 1l3.500 4L8 1" stroke="#bbb"/></svg>
    <svg class="ml-[7px]" width="15" height="17" viewBox="0 0 15 17"><path d="M5 1h9v5H5zM5 6l-3 4h4l3-4" stroke="#aaa" fill="#ddd"/><path d="M1 9h6v7H1z" fill="#999"/></svg>
    <span class="ml-[7px] w-[30px] pt-1 text-[14px]">:0</span>
    <button aria-label="可编辑"><svg width="18" height="17" viewBox="0 0 18 17"><path d="M1 1h16v15H1z" fill="#f5f5f5" stroke="#444" stroke-width="1.500"/><path d="M1 2.500h16" stroke="#444" stroke-width="2"/><path d="M3 6h3M8 9h7M8 13h7M5 9h1M5 13h1" stroke="#335" stroke-width="1.500"/></svg></button>
    <button class="ml-[8px]" aria-label="主模型图标"><svg width="18" height="17" viewBox="0 0 18 17"><path d="M5 1h12v14H9V8H5z" fill="#aaa"/><path d="M1 3v6h6V6l5 5-5 5v-3H1z" fill="#999" stroke="#ddd"/></svg></button>
    <select aria-label="设计选项" class="ml-[7px] flex-1 h-[19px] pl-px bg-[#f5f5f5] text-[#999] appearance-none leading-[17px]"><option>主模型</option></select>
  </footer>

  <script>
    // Categorías del árbol
    const items = ["管道", "管道接头", "管道附件", "管道隔热层", "喷头", "风管", "风管接头", "风管终端", "风管隔热层", "软管", "软风管", "线管", "桥架", "桥架附件", "照明设备"];
    const tree = document.getElementById("tree");
    items.forEach(name => {
      const li = document.createElement("li");
      li.className = "flex-1 flex items-center ml-[21px] border-l border-dotted border-[#999]";
      li.innerHTML = `<span class="w-[7px] border-t border-dotted border-[#999]"></span><label class="flex items-center gap-[2px]"><input type="checkbox" checked class="tick size-[14px] appearance-none border border-[#666] grid place-content-center">${name}</label>`;
      tree.appendChild(li);
    });

    // Anotaciones pequeñas del plano: x, y, ancho, color
    const notes = [
      [370, 440, 14, "#fff"], [346, 455, 22, "#fff"], [348, 483, 20, "#fff"], [370, 496, 14, "#fff"], [376, 520, 14, "#fff"],
      [341, 536, 20, "#fff"], [339, 567, 14, "#fff"], [364, 566, 17, "#fff"], [421, 571, 14, "#fff"], [326, 453, 15, "#fff"],
      [326, 482, 15, "#fff"], [325, 527, 20, "#fff"], [325, 542, 15, "#fff"], [313, 427, 9, "#fff"], [313, 433, 9, "#fff"],
      [432, 486, 10, "#fff"], [432, 491, 10, "#fff"], [442, 499, 14, "#fff"], [313, 591, 9, "#fff"], [348, 591, 18, "#fff"], [535, 591, 12, "#fff"],
      [458, 594, 11, "#fff"], [544, 664, 11, "#fff"], [526, 668, 9, "#fff"], [298, 667, 9, "#fff"], [560, 615, 10, "#fff"],
      [296, 527, 8, "#fff"], [585, 592, 8, "#fff"],
      [265, 427, 10, "#1f4fc0"], [265, 432, 10, "#1f4fc0"], [294, 454, 9, "#1f4fc0"], [384, 486, 10, "#4a3a8a"], [384, 491, 10, "#4a3a8a"],
      [442, 545, 13, "#1f4fc0"], [265, 592, 9, "#1f4fc0"], [346, 593, 8, "#1f4fc0"], [426, 592, 8, "#1f4fc0"], [450, 605, 10, "#1f4fc0"],
      [458, 640, 11, "#1f4fc0"], [535, 640, 12, "#1f4fc0"], [529, 614, 9, "#1f4fc0"], [554, 592, 8, "#1f4fc0"], [247, 667, 10, "#1f4fc0"], [495, 667, 9, "#1f4fc0"]
    ];
    document.getElementById("notes").innerHTML = notes.map(([x, y, w, c]) =>
      `<path d="M${x} ${y}h${w}M${x + 2} ${y + 3}h${w - 3}" stroke="${c}" stroke-width="2" stroke-dasharray="4 1 3 1" opacity="0.9"/>`
    ).join("");
  </script>
</body>
</html>
